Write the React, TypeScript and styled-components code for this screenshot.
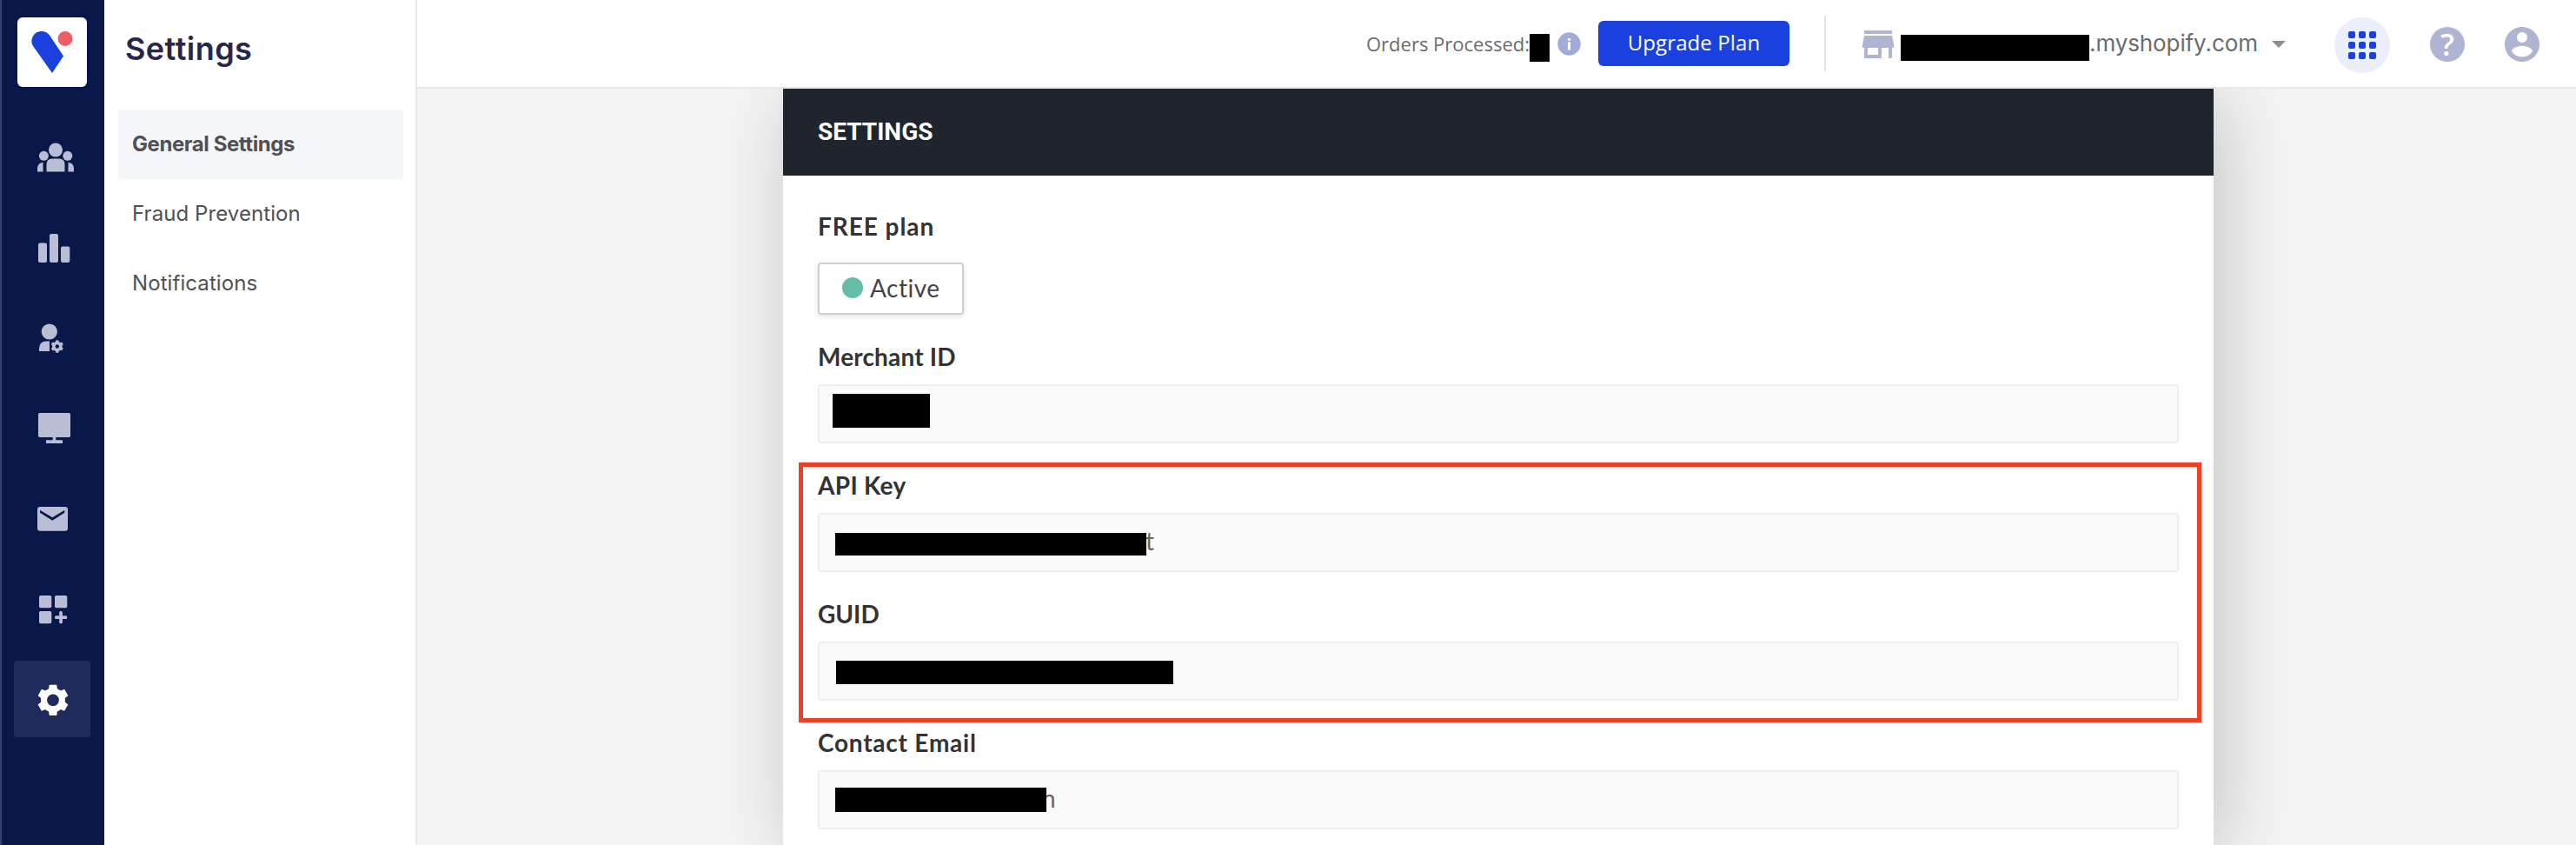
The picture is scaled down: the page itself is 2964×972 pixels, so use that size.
import React from "react";
import styled, { createGlobalStyle } from "styled-components";

const GlobalStyle = createGlobalStyle`
  * { box-sizing: border-box; }
  html, body { margin: 0; padding: 0; }
  body { font-family: Inter, "Liberation Sans", sans-serif; overflow: hidden; }
`;

const Page = styled.div`
  display: flex;
  width: 100%;
  height: 972px;
  overflow: hidden;
  background: #f4f4f4;
`;

/* Icon rail */

const Rail = styled.aside`
  flex: none;
  display: flex;
  flex-direction: column;
  align-items: center;
  width: 120px;
  padding: 20px 0 0;
  background: #091848;
  box-shadow: inset 2px 0 0 #33426b;
`;

const LogoTile = styled.div`
  width: 80px;
  height: 80px;
  margin-bottom: 36px;
  border-radius: 6px;
  background: #fff;
`;

const RailNav = styled.nav`
  display: flex;
  flex-direction: column;
  gap: 16px;
`;

const RailItem = styled.a<{ $active?: boolean }>`
  display: block;
  width: 88px;
  height: 88px;
  border-radius: 4px;
  color: ${(p) => (p.$active ? "#fff" : "#b9bed4")};
  background: ${(p) => (p.$active ? "#1f2b5c" : "transparent")};

  svg {
    display: block;
    fill: currentColor;
  }
`;

/* Section menu */

const SideMenu = styled.aside`
  flex: none;
  width: 360px;
  padding: 6px 14px 0 16px;
  border-right: 2px solid #e8e8ea;
  background: #fff;
`;

const MenuTitle = styled.h1`
  margin: 0 0 20px;
  padding-left: 8px;
  font: 600 36px/100px Inter, sans-serif;
  letter-spacing: 0.45px;
  color: #26264f;
`;

const MenuItem = styled.a<{ $active?: boolean }>`
  display: block;
  height: 80px;
  padding-left: 16px;
  border-radius: 4px;
  font-size: 24px;
  line-height: 79px;
  font-weight: ${(p) => (p.$active ? 700 : 400)};
  letter-spacing: ${(p) => (p.$active ? "-0.43px" : "0.08px")};
  color: #505055;
  background: ${(p) => (p.$active ? "#f5f6fa" : "transparent")};
`;

/* Top bar */

const Main = styled.main`
  flex: 1;
  display: flex;
  flex-direction: column;
  min-width: 0;
`;

const TopBar = styled.header`
  flex: none;
  position: relative;
  z-index: 1;
  display: flex;
  align-items: center;
  justify-content: flex-end;
  height: 102px;
  padding-right: 38px;
  border-bottom: 2px solid #e8e8e8;
  background: #fff;

  svg {
    flex: none;
    display: block;
  }
`;

const OrdersLabel = styled.span`
  width: 188px;
  font: 400 22px/100px "Open Sans", sans-serif;
  white-space: nowrap;
  color: #6a6c6c;
`;

const Mask = styled.span<{ $w: number; $h: number; $top?: number; $left?: number }>`
  flex: none;
  position: relative;
  z-index: 1;
  width: ${(p) => p.$w}px;
  height: ${(p) => p.$h}px;
  margin-top: ${(p) => p.$top ?? 0}px;
  margin-left: ${(p) => p.$left ?? 0}px;
  background: #000;
`;

const InfoSlot = styled.span`
  margin: 0 20px 0 9px;
`;

const UpgradeButton = styled.button`
  width: 220px;
  height: 52px;
  padding: 0 0 2px;
  border: 0;
  border-radius: 6px;
  font: 500 24px/50px "Open Sans", sans-serif;
  letter-spacing: 0.1px;
  color: #fff;
  background: #1a41dd;
`;

const Divider = styled.span`
  width: 2px;
  height: 64px;
  margin: 0 36px 0 40px;
  background: #e3e3e9;
`;

const StoreSlot = styled.span`
  margin: 2px 2px 0 0;
`;

const StoreDomain = styled.span`
  width: 210px;
  font-size: 26px;
  line-height: 100px;
  letter-spacing: -0.1px;
  white-space: nowrap;
  color: #6a6c6c;
`;

const CaretSlot = styled.span`
  margin: 2px 56px 0 0;
`;

const AppsButton = styled.span`
  display: flex;
  align-items: center;
  justify-content: center;
  width: 64px;
  height: 64px;
  margin: 4px 46px 0 0;
  border-radius: 50%;
  background: #ebeffc;
`;

const AppsGrid = styled.span`
  display: grid;
  grid-template-columns: repeat(3, 8px);
  gap: 4px;
`;

const AppsDot = styled.i`
  height: 8px;
  border-radius: 2px;
  background: #1a41dd;
`;

const HelpButton = styled.span`
  width: 40px;
  height: 40px;
  margin: 2px 42px 0 0;
  border-radius: 50%;
  font: 600 35px/40px "Open Sans", sans-serif;
  text-align: center;
  color: #fff;
  background: #aeb4d2;
`;

const AccountSlot = styled.span`
  margin-top: 2px;
`;

/* Settings card */

const Card = styled.section`
  position: relative;
  flex: 1;
  width: 1646px;
  margin-left: 421px;
  background: #fff;
  box-shadow: 10px 10px 80px rgba(0, 0, 0, 0.2);
`;

const CardHeader = styled.h2`
  height: 100px;
  margin: 0;
  padding-left: 40px;
  font: 700 28px/99px Roboto, sans-serif;
  color: #fff;
  background: #1e252d;
`;

const CardBody = styled.div`
  padding: 38px 40px 0;
`;

const Label = styled.div<{ $track?: number }>`
  font: 700 28px/40px Lato, sans-serif;
  letter-spacing: ${(p) => p.$track ?? 0}px;
  color: #333;
`;

const StatusButton = styled.div`
  display: flex;
  align-items: center;
  gap: 8px;
  width: 168px;
  height: 60px;
  margin-top: 22px;
  padding: 0 0 2px 26px;
  border: 2px solid #cfcfcf;
  border-radius: 4px;
  box-shadow: 0 2px 6px rgba(0, 0, 0, 0.12);
  font: 400 28px/40px Lato, sans-serif;
  letter-spacing: 0.5px;
  color: #444;
`;

const StatusDot = styled.i`
  width: 24px;
  height: 24px;
  border-radius: 50%;
  background: #66bda5;
`;

const FieldGroup = styled.div`
  margin-top: 28px;
`;

const Field = styled.div`
  display: flex;
  align-items: flex-start;
  height: 68px;
  margin-top: 12px;
  border: 2px solid #eee;
  border-radius: 4px;
  background: #fafafa;
`;

const FieldText = styled.span<{ $shift: number }>`
  margin-left: ${(p) => p.$shift}px;
  font: 400 28px/60px Lato, sans-serif;
  color: #666;
`;

const Highlight = styled.div`
  position: absolute;
  top: 430px;
  left: 18px;
  width: 1614px;
  height: 299px;
  border: 5px solid #ec4028;
`;

const Logo = () => (
  <svg width="80" height="80" viewBox="0 0 80 80">
    <path
      d="M18.6 33.8 A11.2 11.2 0 0 1 27.6 16 C31.5 16 34.6 17.4 37 20.6 L53 44.6 L40 64 Z"
      fill="#1a41dd"
    />
    <circle cx="55" cy="24.5" r="8.5" fill="#ee5e66" />
  </svg>
);

const RailIcon = ({ children }: { children: React.ReactNode }) => (
  <svg width="88" height="88" viewBox="0 0 88 88">
    {children}
  </svg>
);

const PeopleIcon = () => (
  <RailIcon>
    <circle cx="48" cy="36.5" r="8" />
    <circle cx="34.4" cy="43.3" r="5.5" />
    <circle cx="61.8" cy="43.3" r="5.5" />
    <path d="M37.5 61.5V53q0-6.5 6.5-6.5h8q6.5 0 6.5 6.5v8.5z" />
    <path d="M27 61.5V58q0-6.5 6.5-7.2v10.7z" />
    <path d="M69 61.5V58q0-6.5-6.5-7.2v10.7z" />
  </RailIcon>
);

const ChartIcon = () => (
  <RailIcon>
    <rect x="28" y="39.5" width="10" height="22.5" rx="2" />
    <rect x="41" y="29" width="10" height="33" rx="2" />
    <rect x="54" y="43.5" width="10.3" height="18.5" rx="2" />
  </RailIcon>
);

const UserGearIcon = () => (
  <RailIcon>
    <circle cx="40.8" cy="37.5" r="9.1" />
    <path d="M29 60v-3q0-8.3 8.5-8.5H41V60z" />
    <circle cx="49.8" cy="54.5" r="4" fill="none" stroke="currentColor" strokeWidth="3.6" />
    {[0, 60, 120].map((a) => (
      <path
        key={a}
        d="M48 47.7q1.8-1.1 3.6 0v2.5h-3.6zM48 61.3q1.8 1.1 3.6 0v-2.5h-3.6z"
        transform={`rotate(${a} 49.8 54.5)`}
      />
    ))}
  </RailIcon>
);

const MonitorIcon = () => (
  <RailIcon>
    <rect x="28" y="27" width="37" height="28" rx="1.8" />
    <path d="M44.7 54h3.6v4.3h7.7V62H37v-3.7h7.7z" />
  </RailIcon>
);

const MailIcon = () => (
  <RailIcon>
    <path
      fillRule="evenodd"
      d="M30 31h29q3 0 3 3v21.700q0 3-3 3H30q-3 0-3-3V34q0-3 3-3zM30 34.8v2.9L44.300 46.8 58.300 37.7v-2.9L44.300 43.3z"
    />
  </RailIcon>
);

const AddAppIcon = () => (
  <RailIcon>
    <rect x="29" y="29" width="14.3" height="14.3" rx="1.8" />
    <rect x="47" y="29" width="14.3" height="14.3" rx="1.8" />
    <rect x="29" y="47" width="14.3" height="14.3" rx="1.8" />
    <rect x="52.2" y="47" width="3.7" height="14.2" rx="1.5" />
    <rect x="47" y="52.2" width="14.2" height="3.7" rx="1.5" />
  </RailIcon>
);

const GearIcon = () => (
  <RailIcon>
    <circle cx="45" cy="45.3" r="10.4" fill="none" stroke="currentColor" strokeWidth="7" />
    {[0, 60, 120, 180, 240, 300].map((a) => (
      <path
        key={a}
        d="M40.8 27.7H49.2L50.3 34.5 49 37H41L39.7 34.5z"
        transform={`rotate(${a} 45 45.3)`}
      />
    ))}
  </RailIcon>
);

const InfoIcon = () => (
  <svg width="27" height="27" viewBox="0 0 27 27">
    <circle cx="13.5" cy="13.5" r="13.2" fill="#a1add8" />
    <path d="M12 7h3v2.7h-3zM12 11.5h3v9h-3z" fill="#fff" />
  </svg>
);

const StoreIcon = () => (
  <svg width="48" height="48" viewBox="0 0 24 24" fill="#aeb4d2">
    <path d="M20 4H4v2h16V4zm1 10v-2l-1-5H4l-1 5v2h1v6h10v-6h4v6h2v-6h1zm-9 4H6v-4h6v4z" />
  </svg>
);

const CaretIcon = () => (
  <svg width="16" height="8" viewBox="0 0 16 8">
    <path d="M0 0h16L8 8z" fill="#8e8e8e" />
  </svg>
);

const AccountIcon = () => (
  <svg width="48" height="48" viewBox="0 0 24 24" fill="#aeb4d2">
    <path d="M12 2C6.48 2 2 6.48 2 12s4.48 10 10 10 10-4.48 10-10S17.52 2 12 2zm0 3c1.66 0 3 1.34 3 3s-1.34 3-3 3-3-1.34-3-3 1.34-3 3-3zm0 14.2c-2.5 0-4.71-1.28-6-3.22.03-1.99 4-3.08 6-3.08 1.99 0 5.97 1.09 6 3.08-1.29 1.94-3.5 3.22-6 3.22z" />
  </svg>
);

const RAIL_ITEMS = [PeopleIcon, ChartIcon, UserGearIcon, MonitorIcon, MailIcon, AddAppIcon, GearIcon];
const MENU_ITEMS = ["General Settings", "Fraud Prevention", "Notifications"];

export default function App() {
  return (
    <Page>
      <GlobalStyle />
      <Rail>
        <LogoTile>
          <Logo />
        </LogoTile>
        <RailNav>
          {RAIL_ITEMS.map((Icon, i) => (
            <RailItem key={i} $active={Icon === GearIcon}>
              <Icon />
            </RailItem>
          ))}
        </RailNav>
      </Rail>

      <SideMenu>
        <MenuTitle>Settings</MenuTitle>
        {MENU_ITEMS.map((item, i) => (
          <MenuItem key={item} $active={i === 0}>
            {item}
          </MenuItem>
        ))}
      </SideMenu>

      <Main>
        <TopBar>
          <OrdersLabel>Orders Processed:</OrdersLabel>
          <Mask $w={23} $h={32} $top={10} />
          <InfoSlot>
            <InfoIcon />
          </InfoSlot>
          <UpgradeButton>Upgrade Plan</UpgradeButton>
          <Divider />
          <StoreSlot>
            <StoreIcon />
          </StoreSlot>
          <Mask $w={217} $h={30} $top={10} />
          <StoreDomain>.myshopify.com</StoreDomain>
          <CaretSlot>
            <CaretIcon />
          </CaretSlot>
          <AppsButton>
            <AppsGrid>
              {Array.from({ length: 9 }, (_, i) => (
                <AppsDot key={i} />
              ))}
            </AppsGrid>
          </AppsButton>
          <HelpButton>?</HelpButton>
          <AccountSlot>
            <AccountIcon />
          </AccountSlot>
        </TopBar>

        <Card>
          <CardHeader>SETTINGS</CardHeader>
          <CardBody>
            <Label $track={0.95}>FREE plan</Label>
            <StatusButton>
              <StatusDot />
              Active
            </StatusButton>
            <FieldGroup>
              <Label $track={0.15}>Merchant ID</Label>
              <Field>
                <Mask $w={112} $h={39} $top={9} $left={15} />
              </Field>
            </FieldGroup>
            <FieldGroup>
              <Label $track={0.3}>API Key</Label>
              <Field>
                <Mask $w={358} $h={26} $top={21} $left={18} />
                <FieldText $shift={-1}>t</FieldText>
              </Field>
            </FieldGroup>
            <FieldGroup>
              <Label>GUID</Label>
              <Field>
                <Mask $w={388} $h={27} $top={20} $left={19} />
              </Field>
            </FieldGroup>
            <FieldGroup>
              <Label $track={0.76}>Contact Email</Label>
              <Field>
                <Mask $w={243} $h={28} $top={18} $left={18} />
                <FieldText $shift={-5}>n</FieldText>
              </Field>
            </FieldGroup>
          </CardBody>
          <Highlight />
        </Card>
      </Main>
    </Page>
  );
}
